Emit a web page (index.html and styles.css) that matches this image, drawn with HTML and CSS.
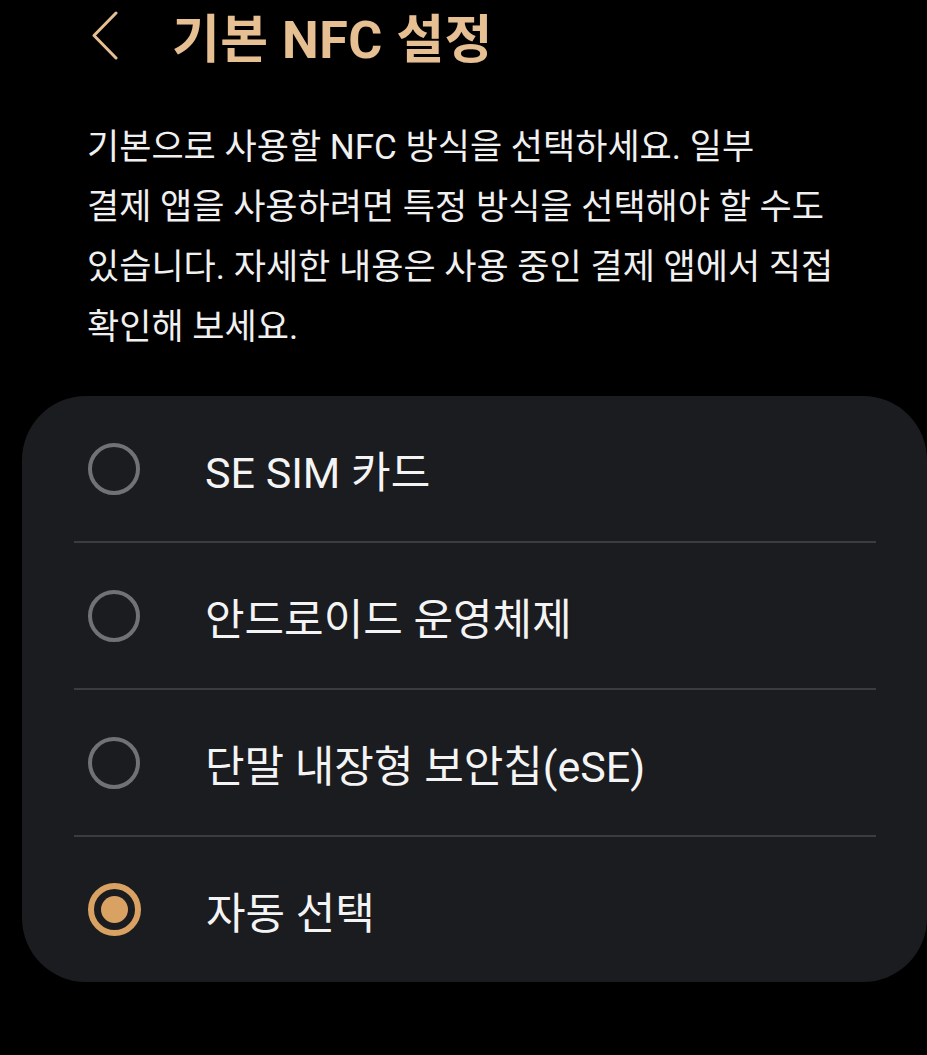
FILE: index.html
```html
<!DOCTYPE html>
<html lang="ko">
<head>
    <meta charset="UTF-8">
    <meta name="viewport" content="width=device-width, initial-scale=1.0">
    <title>기본 NFC 설정</title>
    <link rel="stylesheet" href="styles.css">
</head>
<body>
    <!-- Header -->
    <div class="header">
        <svg class="back" width="27" height="49" viewBox="0 0 27 49">
            <polyline points="25,2 3,24.5 25,47" fill="none" stroke="#e6bf92" stroke-width="3" stroke-linecap="round" stroke-linejoin="round"/>
        </svg>
        <h1>기본 NFC 설정</h1>
    </div>

    <p class="desc">
        기본으로 사용할 NFC 방식을 선택하세요. 일부<br>
        결제 앱을 사용하려면 특정 방식을 선택해야 할 수도<br>
        있습니다. 자세한 내용은 사용 중인 결제 앱에서 직접<br>
        확인해 보세요.
    </p>

    <!-- Options -->
    <div class="card">
        <div class="option">
            <span class="radio"></span>
            <span class="label">SE SIM 카드</span>
        </div>
        <hr class="divider">
        <div class="option">
            <span class="radio"></span>
            <span class="label">안드로이드 운영체제</span>
        </div>
        <hr class="divider">
        <div class="option">
            <span class="radio"></span>
            <span class="label">단말 내장형 보안칩(eSE)</span>
        </div>
        <hr class="divider">
        <div class="option">
            <span class="radio checked"></span>
            <span class="label">자동 선택</span>
        </div>
    </div>
</body>
</html>
```

FILE: styles.css
```css
body {
    margin: 0;
    padding: 0;
    background: #000;
    color: #f2f2f2;
    font-family: Roboto, "Noto Sans CJK KR", sans-serif;
}
.header {
    display: flex;
    align-items: center;
    height: 70px;
    padding-left: 91px;
}
.back {
    display: block;
}
h1 {
    margin: 0 0 0 54px;
    font-size: 52px;
    font-weight: bold;
    color: #e6bf92;
    letter-spacing: 0.5px;
}
.desc {
    margin: 48px 0 38px 0;
    padding-left: 87px;
    font-size: 35px;
    line-height: 60px;
    color: #f0f0f0;
}
.card {
    margin-left: 22px;
    background: #1b1c20;
    border-radius: 64px;
}
.option {
    display: flex;
    align-items: center;
    height: 145px;
    padding-left: 66px;
}
.radio {
    box-sizing: border-box;
    width: 52px;
    height: 52px;
    border: 4px solid #717276;
    border-radius: 50%;
    display: flex;
    align-items: center;
    justify-content: center;
}
.radio.checked {
    width: 53px;
    height: 53px;
    border: 6px solid #d9a263;
}
.radio.checked::after {
    content: "";
    width: 27px;
    height: 27px;
    border-radius: 50%;
    background: #d9a263;
}
.label {
    margin-left: 65px;
    font-size: 43px;
    color: #f4f4f4;
}
.divider {
    margin: 0 51px 0 52px;
    height: 2px;
    border: none;
    background: #3b3c40;
}
```
